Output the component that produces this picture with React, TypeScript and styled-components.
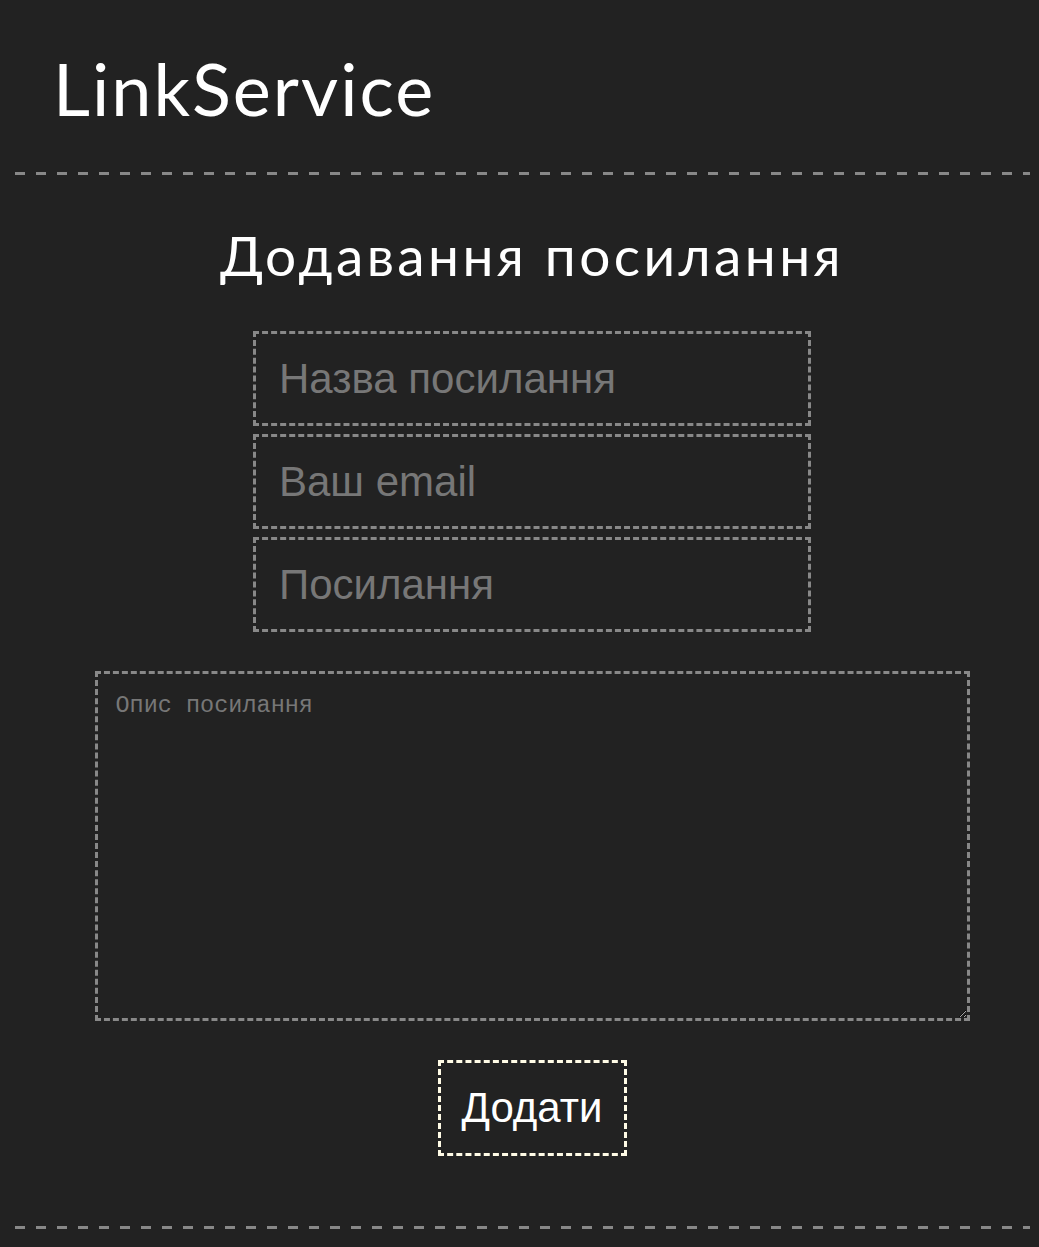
import React from "react";
import styled, { createGlobalStyle } from "styled-components";

const Global = createGlobalStyle`
  html, body { margin: 0; padding: 0; background: #222222; }
  body { font-family: "Liberation Sans", Arial, sans-serif; color: #ffffff; min-height: 1247px; }
  * { box-sizing: border-box; }
`;

const Page = styled.div`
  padding: 0 9px 0 15px;
  display: flex;
  flex-direction: column;
`;

const Header = styled.header`
  height: 172px;
  padding: 52px 0 0 38px;
`;

const Divider = styled.div`
  height: 3px;
  background-image: repeating-linear-gradient(
    to right,
    #888888 0,
    #888888 10px,
    transparent 10px,
    transparent 21px
  );
`;

const Logo = styled.h1`
  margin: 0;
  font-family: Lato, "Noto Sans", sans-serif;
  font-weight: 400;
  font-size: 72px;
  line-height: 1;
  color: #ffffff;
  letter-spacing: 2px;
`;

const Main = styled.main`
  display: flex;
  flex-direction: column;
  align-items: center;
  padding: 0 0 70px 19px;
`;

const Title = styled.h2`
  margin: 44px 0 0;
  font-family: Lato, "Noto Sans", sans-serif;
  font-weight: 400;
  font-size: 55px;
  line-height: 72px;
  letter-spacing: 3.4px;
  color: #ffffff;
`;

const Form = styled.form`
  display: flex;
  flex-direction: column;
  align-items: center;
  width: 100%;
`;

const Fields = styled.div`
  display: flex;
  flex-direction: column;
  gap: 8px;
  margin-top: 40px;
`;

const Input = styled.input`
  width: 558px;
  height: 95px;
  background: transparent;
  border: 3px dashed #888888;
  padding: 0 23px;
  font-family: "Liberation Sans", Arial, sans-serif;
  font-size: 42px;
  color: #ffffff;
  outline: none;
  &::placeholder { color: #777777; }
`;

const Area = styled.textarea`
  margin-top: 39px;
  width: 875px;
  height: 350px;
  background: transparent;
  border: 3px dashed #888888;
  padding: 18px;
  font-family: "Liberation Mono", "Courier New", monospace;
  font-size: 23.5px;
  color: #ffffff;
  outline: none;
  &::placeholder { color: #777777; }
`;

const Button = styled.button`
  margin-top: 39px;
  width: 189px;
  height: 96px;
  background: transparent;
  border: 3px dashed #fffbe6;
  font-family: "Liberation Sans", Arial, sans-serif;
  font-size: 42px;
  color: #ffffff;
  cursor: pointer;
`;

export default function App() {
  return (
    <>
      <Global />
      <Page>
        <Header>
          <Logo>LinkService</Logo>
        </Header>
        <Divider />
        <Main>
          <Title>Додавання посилання</Title>
          <Form onSubmit={(e) => e.preventDefault()}>
            <Fields>
              <Input placeholder="Назва посилання" />
              <Input placeholder="Ваш email" />
              <Input placeholder="Посилання" />
            </Fields>
            <Area placeholder="Опис посилання" />
            <Button type="submit">Додати</Button>
          </Form>
        </Main>
        <Divider />
      </Page>
    </>
  );
}
